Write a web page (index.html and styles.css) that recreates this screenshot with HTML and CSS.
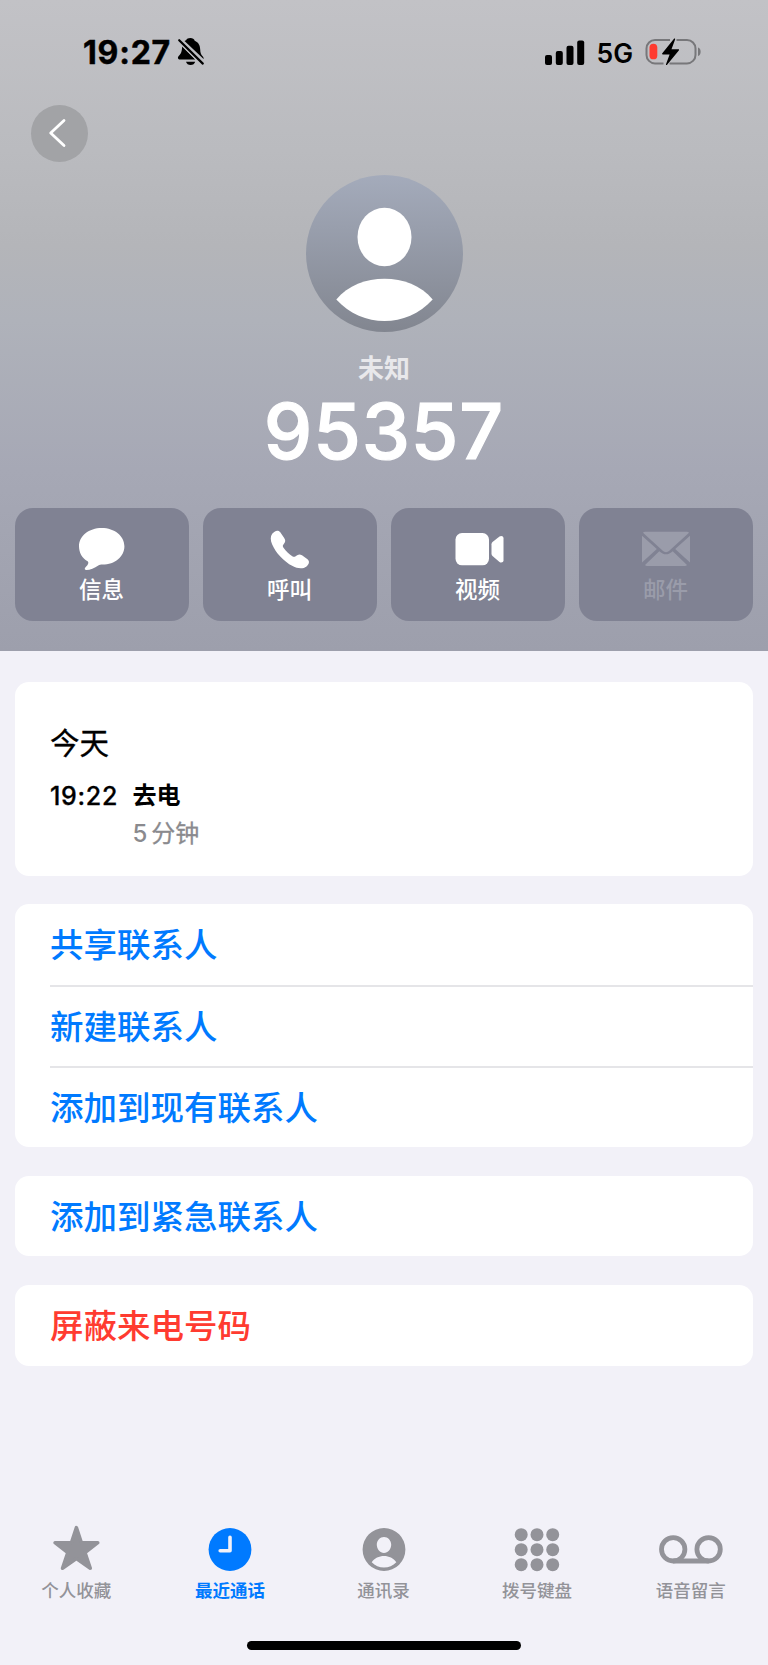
FILE: index.html
```html
<!DOCTYPE html>
<html lang="zh-CN">
<head>
<meta charset="utf-8">
<title>95357</title>
<link rel="stylesheet" href="styles.css">
</head>
<body>
<div class="screen">
  <header class="hero">
    <div class="status">
      <div class="status-left">
        <span class="clock">19:27</span>
        <svg class="bell" width="28" height="30" viewBox="0 0 28 30">
          <path d="M13.400 1c2.200 0 3.800 1.100 4.300 2.700C21.500 5.200 23 8.300 23.200 12.500c.1 3.500.8 5 2.400 6.700.9 1 1.200 1.800 1 2.900L7.500 3.900C8.300 3.500 8.700 3.500 9.100 3.300 9.700 1.800 11.300 1 13.400 1z"/>
          <path d="M5.200 9.200 18.300 22.600H3.200C.8 22.600.2 20.400 1.900 18.700 4.300 16.400 4.800 14.500 5.200 9.200z"/>
          <path d="M9 24.700h9.200c-.6 2-2.300 3.300-4.600 3.300S9.600 26.700 9 24.700z"/>
          <path class="slash-gap" d="M2.200 3.200 25.800 26.600"/>
          <path class="slash" d="M2.200 3.200 25.800 26.600"/>
        </svg>
      </div>
      <div class="status-right">
        <svg class="signal" width="40" height="26" viewBox="0 0 40 26">
          <rect x="0" y="15" width="7" height="10" rx="2"/><rect x="10.800" y="11" width="7" height="14" rx="2"/><rect x="21.500" y="5.700" width="7" height="19.300" rx="2"/><rect x="32.200" y="0.400" width="7" height="24.600" rx="2"/>
        </svg>
        <span class="network">5G</span>
        <svg class="battery" width="57" height="28" viewBox="0 0 57 28">
          <path class="case" d="M25 2H10a8.500 8.500 0 0 0-8.500 8.500v6.400A8.500 8.500 0 0 0 10 25.400H18.500M24.500 25.400H42a8.500 8.500 0 0 0 8.500-8.500v-6.400A8.500 8.500 0 0 0 42 2H31.500"/>
          <path class="cap" d="M53 9.500c3.500.8 3.500 7.700 0 8.500z"/>
          <rect class="charge" x="4.500" y="5.700" width="7.800" height="15.600" rx="3.900"/>
          <path class="bolt" d="M29 .8 17.300 15.200c-.5.700-.2 1.200.5 1.200h6.800l-3.600 9.800c-.3 1 .5 1.200 1.100.5L33.800 12.500c.5-.7.200-1.200-.5-1.200h-6.800L30.100 1.500c.3-1-.5-1.400-1.100-.7z"/>
        </svg>
      </div>
    </div>
    <div class="nav">
      <a class="back"><svg width="57" height="57" viewBox="0 0 57 57"><path d="M33 15.500 19.700 28 33 40.500"/></svg></a>
    </div>
    <svg class="avatar" width="157" height="157" viewBox="0 0 157 157">
      <defs><linearGradient id="shade" x1="0" y1="0" x2="0" y2="1"><stop offset="0" stop-color="#a4abbb"/><stop offset="1" stop-color="#828690"/></linearGradient></defs>
      <circle cx="78.500" cy="78.500" r="78.500" fill="url(#shade)"/>
      <ellipse cx="78.500" cy="62" rx="27" ry="29.300" fill="#fff"/>
      <path d="M30.300 124.500C42 110.500 60 103.800 78.500 103.800S115 110.500 126.700 124.500C113.500 139 96 146 78.500 146S43.500 139 30.300 124.500z" fill="#fff"/>
    </svg>
    <div class="subtitle">未知</div>
    <h1 class="number">95357</h1>
    <div class="actions">
      <a class="action"><svg width="50" height="50" viewBox="0.500 0 50 50"><path d="M25.200 4C38 4 47.900 12 47.900 22.300S38.500 40.600 26 40.600c-2 0-3 .1-4.200.8-3.600 2.400-8.300 4.500-11.800 4.600-1.800 0-2.300-1.300-1.200-2.600 1.600-1.600 2.900-3 3-4.500.1-1-.4-1.300-1.200-1.800C5.600 33.900 2.500 28.800 2.500 22.300 2.500 12 12.400 4 25.200 4z"/></svg><span>信息</span></a>
      <a class="action"><svg width="50" height="50" viewBox="0 0 50 50"><path d="M7.200 9.700C9.300 7.500 12.500 5.200 15.100 8.100L19.200 14.100C20.800 16.500 20.500 17.900 18.800 19.900 17.600 21.300 17.500 22.200 18.500 23.700 21 27.200 24 30.100 27.300 32.300 28.700 33.200 29.700 33 31 31.900 33 30.200 34.800 29.900 37 31.300L42.500 35.200C45.200 37.500 43.800 40.500 41.500 42.400 38 45.300 32.500 44.700 27.600 42.100 18.500 37.300 10.700 28.800 7.200 20.500 5.400 16.200 5.200 12.400 7.200 9.700z"/></svg><span>呼叫</span></a>
      <a class="action"><svg width="50" height="50" viewBox="0 0 50 50"><rect x="2.500" y="9" width="33.500" height="32.300" rx="6.500"/><path d="M38.500 20.200c0-1 .3-1.700 1-2.300l7-5.400c1.500-1 4-.6 4 1.700v22c0 2.300-2.500 2.700-4 1.700l-7-5.800c-.7-.6-1-1.300-1-2.300z"/></svg><span>视频</span></a>
      <a class="action disabled"><svg width="50" height="50" viewBox="0 0 50 50"><path d="M5 7.800h40c1.500 0 2.500.3 3 .9L28.500 26.400c-2.600 2.300-4.400 2.300-7 0L2 8.700c.5-.6 1.500-.9 3-.9zM1 11.800 15.800 25 1 38.500zM49 11.800V38.500L34.200 25zM18.300 27.200C22.500 31.300 27.500 31.300 31.700 27.200L46 41c-.7.700-1.500 1-2.700 1H6.700C5.500 42 4.700 41.700 4 41z"/></svg><span>邮件</span></a>
    </div>
  </header>
  <main class="content">
    <section class="card log">
      <h2 class="day">今天</h2>
      <div class="call"><span class="time">19:22</span><div class="detail"><div class="kind">去电</div><div class="duration">5<span class="unit">分钟</span></div></div></div>
    </section>
    <section class="card">
      <a class="row">共享联系人</a>
      <a class="row">新建联系人</a>
      <a class="row">添加到现有联系人</a>
    </section>
    <section class="card"><a class="row">添加到紧急联系人</a></section>
    <section class="card"><a class="row danger">屏蔽来电号码</a></section>
  </main>
  <nav class="tabs">
    <a class="tab"><svg width="66" height="50" viewBox="0.800 0 66 50"><path class="star" d="M33.200 3.600 38.200 18.700H54.600L41.800 28.600 47.100 44.200 33.200 34.600 19.300 44.200 24.600 28.600 11.800 18.700H28.200z"/></svg><span>个人收藏</span></a>
    <a class="tab active"><svg width="66" height="50" viewBox="0 0 66 50"><circle cx="33" cy="25.500" r="21.400"/><path class="hands" d="M33 13.200V26.800H23.200"/></svg><span>最近通话</span></a>
    <a class="tab"><svg width="66" height="50" viewBox="0 0 66 50"><path fill-rule="evenodd" d="M33 4.100a21.400 21.400 0 1 0 0 42.800 21.400 21.400 0 0 0 0-42.800zM33 13c4 0 7.200 3.500 7.200 7.800S37 28.900 33 28.900s-7.200-3.800-7.200-8.100S29 13 33 13zM20.700 38.200C23.500 34.200 28 32 33 32s9.500 2.200 12.300 6.200C42 41.700 37.700 43.600 33 43.600S24 41.700 20.700 38.200z"/></svg><span>通讯录</span></a>
    <a class="tab"><svg width="66" height="50" viewBox="1 0 66 50"><circle cx="17.200" cy="10.700" r="6.500"/><circle cx="33" cy="10.700" r="6.500"/><circle cx="48.700" cy="10.700" r="6.500"/><circle cx="17.200" cy="25.700" r="6.500"/><circle cx="33" cy="25.700" r="6.500"/><circle cx="48.700" cy="25.700" r="6.500"/><circle cx="17.200" cy="40.700" r="6.500"/><circle cx="33" cy="40.700" r="6.500"/><circle cx="48.700" cy="40.700" r="6.500"/></svg><span>拨号键盘</span></a>
    <a class="tab"><svg width="66" height="50" viewBox="0 0 66 50"><g class="reels"><circle cx="15.200" cy="25.300" r="11.700"/><circle cx="50.600" cy="25.300" r="11.700"/><path d="M15.200 37H50.600"/></g></svg><span>语音留言</span></a>
  </nav>
  <div class="home-bar"></div>
</div>
</body>
</html>
```
FILE: styles.css
```css
* { box-sizing: border-box; }
body { margin: 0; background: #f2f1f8; font-family: Inter, "Noto Sans CJK SC", sans-serif; color: #000; }
svg { display: block; overflow: visible; flex: none; }
h1, h2 { margin: 0; }
.screen { width: 768px; height: 1665px; display: flex; flex-direction: column; overflow: hidden; }

.hero { height: 651px; flex: none; display: flex; flex-direction: column; align-items: center; background: linear-gradient(#c2c2c6 0, #babbbf 150px, #b4b5b9 245px, #afb2ba 320px, #a6a8b5 470px, #9d9fac 651px); }
.status { width: 100%; height: 105px; padding: 0 66px 0 83px; display: flex; justify-content: space-between; align-items: center; }
.status-left, .status-right { display: flex; align-items: center; }
.clock { font-size: 32px; font-weight: 700; line-height: 40px; width: 94px; white-space: nowrap; letter-spacing: 0.800px; -webkit-text-stroke: 0.500px; }
.bell { margin-bottom: 1px; }
.slash { stroke: #000; stroke-width: 2.2; stroke-linecap: round; }
.slash-gap { stroke: #bfbfc3; stroke-width: 4.800; }
.network { font-size: 26.500px; font-weight: 600; line-height: 32px; width: 48.500px; margin-left: 11.500px; padding-top: 1px; }
.battery { margin-bottom: 1px; }
.case { fill: none; stroke: #77777a; stroke-width: 2; }
.cap { fill: #77777a; }
.charge { fill: #ff3b30; }
.nav { width: 100%; height: 57px; padding-left: 30.500px; }
.back { display: block; width: 57px; height: 57px; border-radius: 50%; background: #a2a3a6; }
.back path { fill: none; stroke: #fff; stroke-width: 2.8; stroke-linecap: round; stroke-linejoin: round; }
.avatar { margin-top: 13px; }
.subtitle { margin-top: 21px; height: 32px; line-height: 32px; font-size: 26px; font-weight: 700; color: #e8e8eb; }
.number { margin-top: 6px; height: 80px; line-height: 80px; font-size: 77px; font-weight: 500; color: #fff; letter-spacing: 0.900px; -webkit-text-stroke: 1.200px; }
.actions { width: 100%; margin-top: 37px; padding: 0 15px; display: grid; grid-template-columns: repeat(4, 1fr); gap: 14px; }
.action { height: 113px; padding-top: 16px; border-radius: 18px; background: #808293; color: #fff; fill: #fff; display: flex; flex-direction: column; align-items: center; font-size: 22.500px; font-weight: 500; line-height: 32px; }
.action span { padding-right: 1px; }
.disabled { color: #9a9caa; fill: #9a9caa; }

.content { flex: 1; padding: 31px 15px 0; display: flex; flex-direction: column; gap: 28.800px; }
.card { background: #fff; border-radius: 14px; overflow: hidden; flex: none; }
.log { height: 193.700px; padding: 41px 35px 0; }
.day { font-size: 29.500px; line-height: 40px; font-weight: 400; -webkit-text-stroke: 0.300px; }
.call { display: flex; margin-top: 14px; }
.time { width: 82.500px; font-size: 25px; line-height: 38px; font-weight: 500; letter-spacing: 0.700px; -webkit-text-stroke: 0.300px; }
.detail { font-size: 24px; line-height: 38px; }
.kind { font-weight: 700; }
.duration { color: #8a8a8e; font-weight: 500; }
.unit { margin-left: 4px; font-weight: 400; -webkit-text-stroke: 0.300px; }
.row { display: block; height: 80.800px; margin-left: 35px; line-height: 83px; font-size: 33.500px; font-weight: 500; color: #007aff; }
.row + .row { border-top: 2px solid #e5e5e8; line-height: 80px; }
.danger { color: #ff3b30; }

.tabs { height: 117px; flex: none; display: grid; grid-template-columns: repeat(5, 1fr); }
.tab { display: flex; flex-direction: column; align-items: center; color: #939399; fill: #939399; font-size: 17.500px; line-height: 24px; font-weight: 500; }
.tab span { margin-top: 5px; padding-right: 1px; }
.active { color: #007aff; fill: #007aff; font-weight: 700; }
.star { stroke: #939399; stroke-width: 3.5; stroke-linejoin: round; }
.hands { fill: none; stroke: #f2f1f8; stroke-width: 3.6; stroke-linecap: round; stroke-linejoin: round; }
.reels { fill: none; stroke: #939399; stroke-width: 4.800; }
.home-bar { width: 274px; height: 9px; border-radius: 5px; background: #000; margin: 0 auto 15px; flex: none; }
```
